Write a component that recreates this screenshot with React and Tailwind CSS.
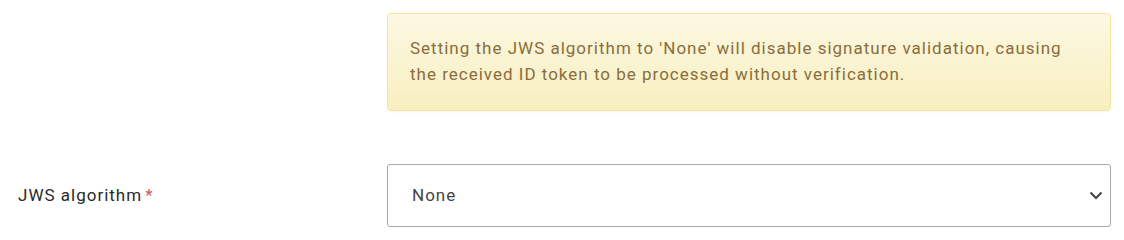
import React from "react";

export default function App() {
  return (
    <div className="w-[1124px] h-[235px] bg-white" style={{ fontFamily: "Roboto, 'Liberation Sans', sans-serif" }}>
      <div className="pt-[13px] pl-[387px] pr-[13px]">
        <div className="rounded-[4px] border border-[#f5e79e] bg-gradient-to-b from-[#fcf8e3] to-[#f8efc0] px-[22px] pt-[22px] pb-[23px] text-[17px] leading-[25.5px] tracking-[1px] text-[#8a6d3b] shadow-[0_1px_2px_rgba(0,0,0,0.05)]">
          Setting the JWS algorithm to 'None' will disable signature validation, causing
          <br />
          the received ID token to be processed without verification.
        </div>
      </div>
      <div className="mt-[53px] flex items-center pr-[13px]">
        <div className="w-[387px] shrink-0 pl-[18px] text-[17px] tracking-[1px] text-[#2a2a2a]">
          JWS algorithm<span className="ml-[3px] text-[#d9534f]">*</span>
        </div>
        <div className="flex h-[63px] flex-1 items-center justify-between rounded-[3px] border border-[#a9a9a9] bg-white pl-[24px] pr-[7px] text-[17px] tracking-[1px] text-[#444]">
          <span>None</span>
          <svg width="14" height="9" viewBox="0 0 14 9" fill="none">
            <path d="M1.5 1.5 L7 7 L12.5 1.5" stroke="#444" strokeWidth="2" />
          </svg>
        </div>
      </div>
    </div>
  );
}
